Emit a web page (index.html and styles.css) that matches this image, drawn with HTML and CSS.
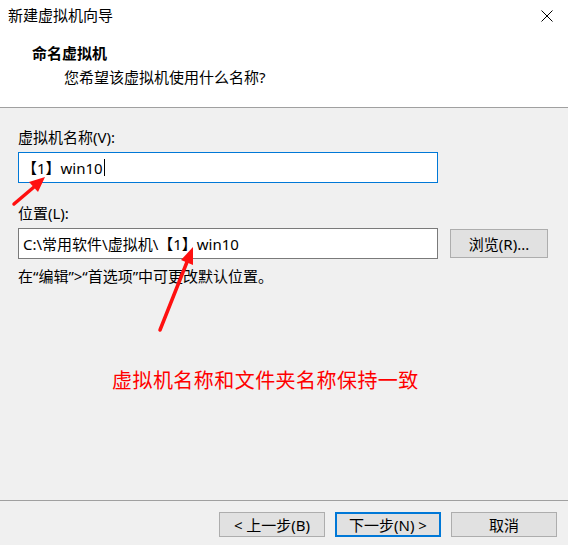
FILE: index.html
```html
<!DOCTYPE html>
<html lang="zh-CN">
<head>
<meta charset="utf-8">
<title>新建虚拟机向导</title>
<link rel="stylesheet" href="styles.css">
</head>
<body>
<div class="window">
  <div class="header">
    <div class="titlebar">
      <span class="title">新建虚拟机向导</span>
      <svg class="close" width="12" height="12" viewBox="0 0 12 12"><path d="M0.5 0.5 L11.5 11.5 M11.5 0.5 L0.5 11.5" stroke="#000" stroke-width="1" fill="none"/></svg>
    </div>
    <div class="heading">命名虚拟机</div>
    <div class="subheading">您希望该虚拟机使用什么名称?</div>
  </div>
  <div class="content">
    <div class="label">虚拟机名称(V):</div>
    <div class="field focused"><span>【1】win10</span><span class="caret"></span></div>
    <div class="label label-loc">位置(L):</div>
    <div class="row">
      <div class="field">C:\常用软件\虚拟机\【1】win10</div>
      <div class="btn browse">浏览(R)...</div>
    </div>
    <div class="hint">在“编辑”&gt;“首选项”中可更改默认位置。</div>
    <div class="note">虚拟机名称和文件夹名称保持一致</div>
  </div>
  <div class="footer">
    <div class="btn">&lt; 上一步(B)</div>
    <div class="btn default">下一步(N) &gt;</div>
    <div class="btn">取消</div>
  </div>
  <svg class="arrows" width="568" height="545" viewBox="0 0 568 545">
    <line x1="14" y1="204" x2="34" y2="187" stroke="#ff1010" stroke-width="3.5" stroke-linecap="round"/>
    <polygon points="45,177 38,192 29,182" fill="#ff1010"/>
    <line x1="160" y1="330" x2="187" y2="262" stroke="#ff1010" stroke-width="3.5" stroke-linecap="round"/>
    <polygon points="193,247 193,265 181,260" fill="#ff1010"/>
  </svg>
</div>
</body>
</html>
```
FILE: styles.css
```css
html, body {
  margin: 0;
  padding: 0;
}
body {
  width: 568px;
  height: 545px;
  overflow: hidden;
  background: #f0f0f0;
  font-family: "Noto Sans", "Noto Sans CJK SC", sans-serif;
  font-size: 15px;
  line-height: 20px;
  color: #000;
}
.window {
  position: relative;
  width: 568px;
  height: 545px;
  display: flex;
  flex-direction: column;
}
.header {
  background: #fff;
  border-bottom: 1px solid #a0a0a0;
  box-sizing: border-box;
  height: 108px;
}
.titlebar {
  height: 30px;
  display: flex;
  align-items: center;
  justify-content: space-between;
  padding-left: 8px;
  padding-right: 15px;
}
.close {
  display: block;
  margin-top: 2px;
}
.heading {
  margin-top: 13px;
  padding-left: 32px;
  font-weight: 700;
}
.subheading {
  margin-top: 4px;
  padding-left: 64px;
}
.content {
  flex: 1;
  padding: 0 18px;
}
.label {
  margin-top: 19px;
}
.label-loc {
  margin-top: 20px;
}
.field {
  margin-top: 5px;
  box-sizing: border-box;
  width: 420px;
  height: 31px;
  border: 1px solid #7a7a7a;
  background: #fff;
  padding: 0 4px;
  display: flex;
  align-items: center;
  white-space: nowrap;
}
.field.focused {
  border-color: #0078d7;
  padding-left: 3px;
}
.caret {
  display: inline-block;
  width: 1px;
  height: 17px;
  background: #000;
  margin-left: 1px;
}
.row {
  margin-top: 5px;
  display: flex;
  align-items: center;
}
.row .field {
  margin-top: 0;
}
.btn {
  box-sizing: border-box;
  width: 106px;
  height: 25px;
  border: 1px solid #adadad;
  background: #e1e1e1;
  display: flex;
  align-items: center;
  justify-content: center;
  white-space: nowrap;
}
.btn.default {
  border: 2px solid #0078d7;
}
.browse {
  width: 98px;
  height: 29px;
  margin-left: 12px;
}
.hint {
  margin-top: 7px;
}
.note {
  margin-top: 81px;
  padding-left: 94px;
  font-size: 20px;
  line-height: 28px;
  letter-spacing: 0.45px;
  color: #ff0000;
}
.footer {
  height: 45px;
  box-sizing: border-box;
  border-top: 1px solid #a0a0a0;
  padding: 11px 11px 0 0;
  display: flex;
  justify-content: flex-end;
  gap: 10px;
}
.arrows {
  position: absolute;
  left: 0;
  top: 0;
  pointer-events: none;
}
```
